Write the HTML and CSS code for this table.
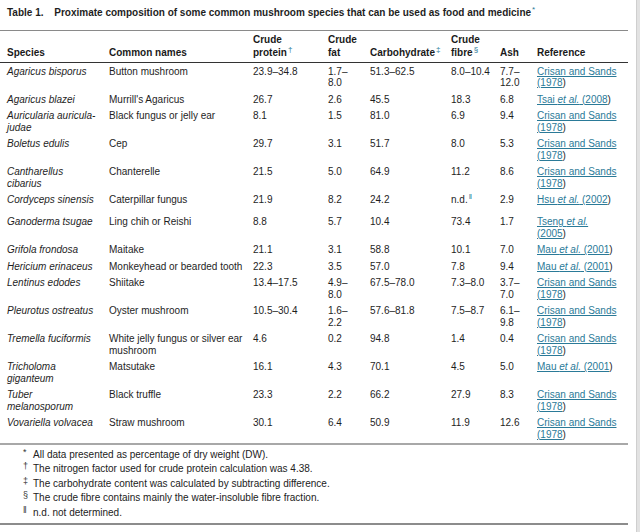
FILE: index.html
```html
<!DOCTYPE html>
<html lang="en">
<head>
<meta charset="utf-8">
<title>Table 1</title>
<link rel="stylesheet" href="styles.css">
</head>
<body>
<div class="page">
  <div class="content">
    <div class="caption"><span class="label">Table 1.</span> Proximate composition of some common mushroom species that can be used as food and medicine<sup class="mark">*</sup></div>
    <table class="data">
      <colgroup>
        <col class="c-species"><col class="c-common"><col class="c-protein"><col class="c-fat"><col class="c-carb"><col class="c-fibre"><col class="c-ash"><col class="c-ref">
      </colgroup>
      <thead>
        <tr>
          <th>Species</th>
          <th>Common names</th>
          <th>Crude<br>protein<sup class="mark">†</sup></th>
          <th>Crude<br>fat</th>
          <th>Carbohydrate<sup class="mark">‡</sup></th>
          <th>Crude<br>fibre<sup class="mark">§</sup></th>
          <th>Ash</th>
          <th>Reference</th>
        </tr>
      </thead>
      <tbody>
        <tr><td class="sp">Agaricus bisporus</td><td>Button mushroom</td><td>23.9–34.8</td><td>1.7–<br>8.0</td><td>51.3–62.5</td><td>8.0–10.4</td><td>7.7–<br>12.0</td><td><a href="#">Crisan and Sands<br>(1978</a>)</td></tr>
        <tr><td class="sp">Agaricus blazei</td><td>Murrill's Agaricus</td><td>26.7</td><td>2.6</td><td>45.5</td><td>18.3</td><td>6.8</td><td><a href="#">Tsai <i>et al.</i> (2008</a>)</td></tr>
        <tr><td class="sp">Auricularia auricula-<br>judae</td><td>Black fungus or jelly ear</td><td>8.1</td><td>1.5</td><td>81.0</td><td>6.9</td><td>9.4</td><td><a href="#">Crisan and Sands<br>(1978</a>)</td></tr>
        <tr><td class="sp">Boletus edulis</td><td>Cep</td><td>29.7</td><td>3.1</td><td>51.7</td><td>8.0</td><td>5.3</td><td><a href="#">Crisan and Sands<br>(1978</a>)</td></tr>
        <tr><td class="sp">Cantharellus<br>cibarius</td><td>Chanterelle</td><td>21.5</td><td>5.0</td><td>64.9</td><td>11.2</td><td>8.6</td><td><a href="#">Crisan and Sands<br>(1978</a>)</td></tr>
        <tr class="row-sup"><td class="sp">Cordyceps sinensis</td><td>Caterpillar fungus</td><td>21.9</td><td>8.2</td><td>24.2</td><td>n.d.<sup class="mark">‖</sup></td><td>2.9</td><td><a href="#">Hsu <i>et al.</i> (2002</a>)</td></tr>
        <tr><td class="sp">Ganoderma tsugae</td><td>Ling chih or Reishi</td><td>8.8</td><td>5.7</td><td>10.4</td><td>73.4</td><td>1.7</td><td><a href="#">Tseng <i>et al.</i><br>(2005</a>)</td></tr>
        <tr><td class="sp">Grifola frondosa</td><td>Maitake</td><td>21.1</td><td>3.1</td><td>58.8</td><td>10.1</td><td>7.0</td><td><a href="#">Mau <i>et al.</i> (2001</a>)</td></tr>
        <tr><td class="sp">Hericium erinaceus</td><td>Monkeyhead or bearded tooth</td><td>22.3</td><td>3.5</td><td>57.0</td><td>7.8</td><td>9.4</td><td><a href="#">Mau <i>et al.</i> (2001</a>)</td></tr>
        <tr><td class="sp">Lentinus edodes</td><td>Shiitake</td><td>13.4–17.5</td><td>4.9–<br>8.0</td><td>67.5–78.0</td><td>7.3–8.0</td><td>3.7–<br>7.0</td><td><a href="#">Crisan and Sands<br>(1978</a>)</td></tr>
        <tr><td class="sp">Pleurotus ostreatus</td><td>Oyster mushroom</td><td>10.5–30.4</td><td>1.6–<br>2.2</td><td>57.6–81.8</td><td>7.5–8.7</td><td>6.1–<br>9.8</td><td><a href="#">Crisan and Sands<br>(1978</a>)</td></tr>
        <tr><td class="sp">Tremella fuciformis</td><td>White jelly fungus or silver ear<br>mushroom</td><td>4.6</td><td>0.2</td><td>94.8</td><td>1.4</td><td>0.4</td><td><a href="#">Crisan and Sands<br>(1978</a>)</td></tr>
        <tr><td class="sp">Tricholoma<br>giganteum</td><td>Matsutake</td><td>16.1</td><td>4.3</td><td>70.1</td><td>4.5</td><td>5.0</td><td><a href="#">Mau <i>et al.</i> (2001</a>)</td></tr>
        <tr><td class="sp">Tuber<br>melanosporum</td><td>Black truffle</td><td>23.3</td><td>2.2</td><td>66.2</td><td>27.9</td><td>8.3</td><td><a href="#">Crisan and Sands<br>(1978</a>)</td></tr>
        <tr><td class="sp">Vovariella volvacea</td><td>Straw mushroom</td><td>30.1</td><td>6.4</td><td>50.9</td><td>11.9</td><td>12.6</td><td><a href="#">Crisan and Sands<br>(1978</a>)</td></tr>
      </tbody>
    </table>
    <ul class="notes">
      <li><span class="nm">*</span>All data presented as percentage of dry weight (DW).</li>
      <li><span class="nm">†</span>The nitrogen factor used for crude protein calculation was 4.38.</li>
      <li><span class="nm">‡</span>The carbohydrate content was calculated by subtracting difference.</li>
      <li><span class="nm">§</span>The crude fibre contains mainly the water-insoluble fibre fraction.</li>
      <li><span class="nm">‖</span>n.d. not determined.</li>
    </ul>
  </div>
  <div class="sidebar"></div>
</div>
</body>
</html>
```

FILE: styles.css
```css
html, body {
  margin: 0;
  padding: 0;
  background: #fff;
}
body {
  font-family: "Liberation Sans", Arial, Helvetica, sans-serif;
  font-size: 10px;
  color: #1e1e1e;
}
.page {
  display: flex;
  height: 532px;
  overflow: hidden;
}
.content {
  width: 628px;
  flex: none;
}
.sidebar {
  margin-left: 8px;
  flex: 1;
  background: #e2e2e2;
  border-left: 1px solid #cfcfcf;
}
.caption {
  font-weight: bold;
  line-height: 12px;
  padding: 7px 0 0 7px;
  margin-bottom: 11px;
  white-space: nowrap;
}
.caption .label {
  margin-right: 8px;
}
.mark {
  color: #2a7a98;
  font-size: 8px;
  line-height: 0;
  vertical-align: 4px;
  font-weight: normal;
  margin-left: 1px;
}
.data {
  width: 628px;
  table-layout: fixed;
  border-collapse: separate;
  border-spacing: 0;
  white-space: nowrap;
}
.c-species { width: 102px; }
.c-common { width: 144px; }
.c-protein { width: 75px; }
.c-fat { width: 42px; }
.c-carb { width: 81px; }
.c-fibre { width: 49px; }
.c-ash { width: 37px; }
.c-ref { width: 98px; }
.data th {
  text-align: left;
  vertical-align: bottom;
  font-weight: bold;
  line-height: 13px;
  padding: 2px 0 3px 7px;
  border-top: 1px solid #8a8a8a;
  border-bottom: 1px solid #333;
  color: #1a1a1a;
}
.data td {
  vertical-align: top;
  line-height: 11.5px;
  padding: 2.5px 0 2.5px 7px;
  overflow: hidden;
}
.data .row-sup td {
  padding-bottom: 8px;
}
.data td.sp {
  font-style: italic;
}
.data tbody tr:last-child td {
  border-bottom: 2px solid #a8a8a8;
}
.data a {
  color: #2a7a98;
  text-decoration: underline;
  text-underline-offset: 1px;
}
.notes {
  list-style: none;
  margin: 0;
  padding: 3px 0 3px 23px;
  border-bottom: 2px solid #8c8c8c;
}
.notes li {
  line-height: 14.5px;
  color: #222;
}
.notes .nm {
  display: inline-block;
  width: 10px;
  font-size: 9px;
  line-height: 0;
  vertical-align: 3px;
  color: #333;
}
```
